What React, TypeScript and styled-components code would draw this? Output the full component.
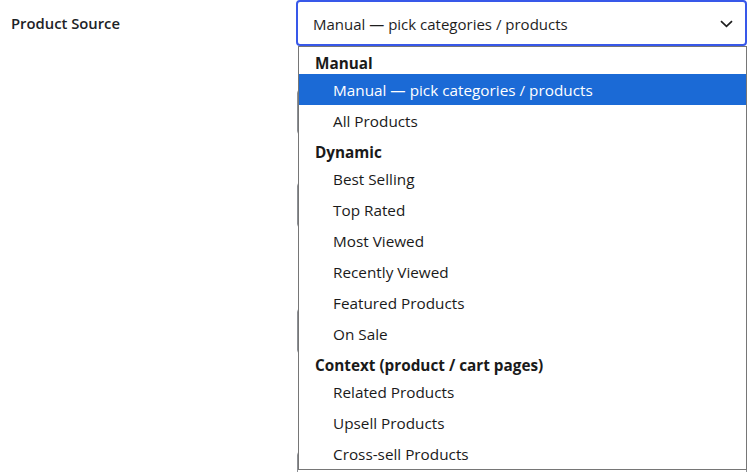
import React from "react";
import styled, { createGlobalStyle } from "styled-components";

const Global = createGlobalStyle`
  html, body { margin: 0; padding: 0; background: #ffffff; }
  body { font-family: "Open Sans", "Noto Sans", sans-serif; color: #1e1e1e; overflow: hidden; }
  * { box-sizing: border-box; }
`;

const Form = styled.div`
  display: grid;
  grid-template-columns: 296px 451px;
  width: 748px;
  height: 472px;
  overflow: hidden;
`;

const Label = styled.div`
  padding: 13px 0 0 11px;
  font-size: 14.8px;
  font-weight: 600;
  line-height: 20px;
  color: #1d2327;
`;

const FieldColumn = styled.div`
  display: flex;
  flex-direction: column;
`;

const SelectWrap = styled.div`
  position: relative;
  z-index: 2;
`;

const Trigger = styled.div`
  height: 46px;
  border: 2px solid #3858e9;
  border-radius: 4px;
  display: flex;
  align-items: center;
  justify-content: space-between;
  padding: 1px 12px 0 15px;
  font-size: 15px;
  color: #1e1e1e;
  background: #fff;
`;

const Popup = styled.div`
  position: absolute;
  top: 46px;
  left: 2px;
  width: 449px;
  background: #fff;
  border: 1px solid #767676;
  display: flex;
  flex-direction: column;
`;

const GroupHeader = styled.div`
  height: 27px;
  padding: 6px 0 0 16px;
  font-size: 15.3px;
  font-weight: 700;
  line-height: 20px;
  color: #1a1a1a;
`;

const Option = styled.div<{ $selected?: boolean }>`
  height: 31px;
  display: flex;
  align-items: center;
  padding: 1px 0 0 34px;
  font-size: 15.3px;
  color: ${(p) => (p.$selected ? "#ffffff" : "#1a1a1a")};
  background: ${(p) => (p.$selected ? "#1b6ad6" : "transparent")};
`;

const HiddenField = styled.div<{ $gap: number }>`
  margin-top: ${(p) => p.$gap}px;
  margin-left: 1px;
  height: 46px;
  border: 1px solid #8c8f94;
  border-radius: 4px;
  display: flex;
  align-items: center;
  padding: 0 14px;
  font-size: 14px;
  color: #2c3338;
`;

const Chevron = () => (
  <svg width="13" height="8" viewBox="0 0 13 8" fill="none">
    <path d="M1 1.2 L6.5 6.4 L12 1.2" stroke="#1e1e1e" strokeWidth="1.7" />
  </svg>
);

const groups: { title: string; items: string[] }[] = [
  { title: "Manual", items: ["Manual — pick categories / products", "All Products"] },
  {
    title: "Dynamic",
    items: ["Best Selling", "Top Rated", "Most Viewed", "Recently Viewed", "Featured Products", "On Sale"],
  },
  { title: "Context (product / cart pages)", items: ["Related Products", "Upsell Products", "Cross-sell Products"] },
];

export default function App() {
  const selected = "Manual — pick categories / products";
  return (
    <>
      <Global />
      <Form>
        <Label>Product Source</Label>
        <FieldColumn>
          <SelectWrap>
            <Trigger>
              <span>{selected}</span>
              <Chevron />
            </Trigger>
            <Popup>
              {groups.map((g) => (
                <React.Fragment key={g.title}>
                  <GroupHeader>{g.title}</GroupHeader>
                  {g.items.map((it) => (
                    <Option key={it} $selected={it === selected}>
                      {it}
                    </Option>
                  ))}
                </React.Fragment>
              ))}
            </Popup>
          </SelectWrap>
          <HiddenField $gap={43} />
          <HiddenField $gap={47} />
          <HiddenField $gap={80} />
          <HiddenField $gap={97} />
        </FieldColumn>
      </Form>
    </>
  );
}
